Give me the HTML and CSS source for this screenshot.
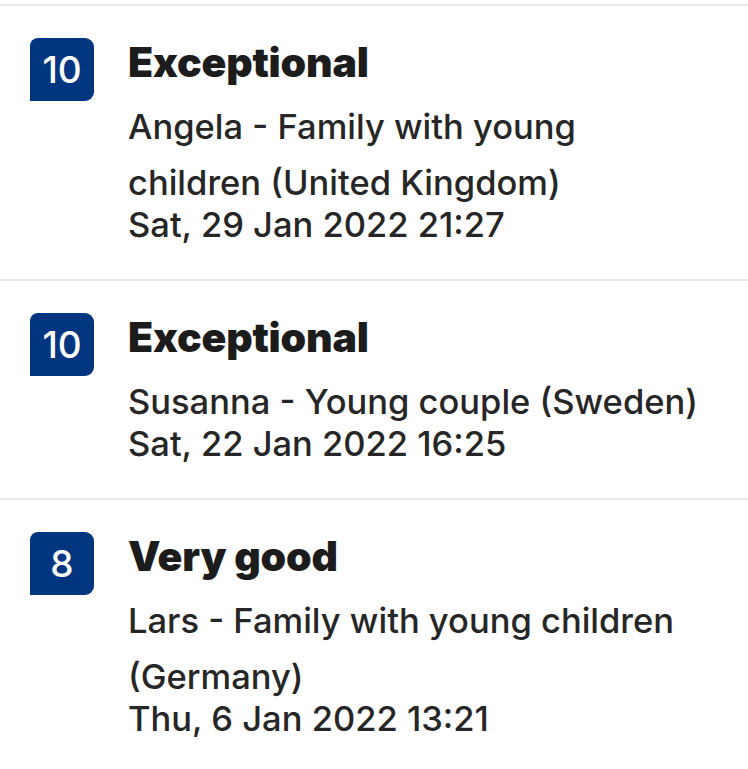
FILE: index.html
```html
<!DOCTYPE html>
<html lang="en">
<head>
<meta charset="utf-8">
<title>Reviews</title>
<link rel="stylesheet" href="styles.css">
</head>
<body>
<div class="list">
  <div class="review">
    <div class="badge">10</div>
    <div class="content">
      <div class="title">Exceptional</div>
      <div class="name">Angela - Family with young children (United Kingdom)</div>
      <div class="date">Sat, 29 Jan 2022 21:27</div>
    </div>
  </div>
  <div class="review">
    <div class="badge">10</div>
    <div class="content">
      <div class="title">Exceptional</div>
      <div class="name">Susanna - Young couple (Sweden)</div>
      <div class="date">Sat, 22 Jan 2022 16:25</div>
    </div>
  </div>
  <div class="review">
    <div class="badge">8</div>
    <div class="content">
      <div class="title">Very good</div>
      <div class="name">Lars - Family with young children (Germany)</div>
      <div class="date">Thu, 6 Jan 2022 13:21</div>
    </div>
  </div>
</div>
</body>
</html>
```
FILE: styles.css
```css
html, body {
  margin: 0;
  padding: 0;
  background: #ffffff;
}

body {
  font-family: Inter, "Noto Sans", sans-serif;
  color: #262626;
}

.list {
  padding-top: 4px;
}

.review {
  display: flex;
  align-items: flex-start;
  border-top: 2px solid #e8e8e8;
  padding: 32px 40px 40px 30px;
}

.badge {
  flex: 0 0 64px;
  height: 63px;
  border-radius: 8px 9px 9px 0;
  background: #003580;
  color: #ffffff;
  font-size: 37px;
  font-weight: 500;
  display: flex;
  align-items: center;
  justify-content: center;
  letter-spacing: 0;
}

.content {
  margin-left: 34px;
  flex: 1;
  min-width: 0;
}

.title {
  font-size: 41px;
  font-weight: 900;
  line-height: 48px;
  color: #1c1c1c;
  letter-spacing: -0.2px;
}

.name {
  margin-top: 13px;
  font-size: 34.5px;
  line-height: 56px;
  font-weight: 500;
}

.date {
  font-size: 34.5px;
  line-height: 28px;
  font-weight: 500;
}
```
